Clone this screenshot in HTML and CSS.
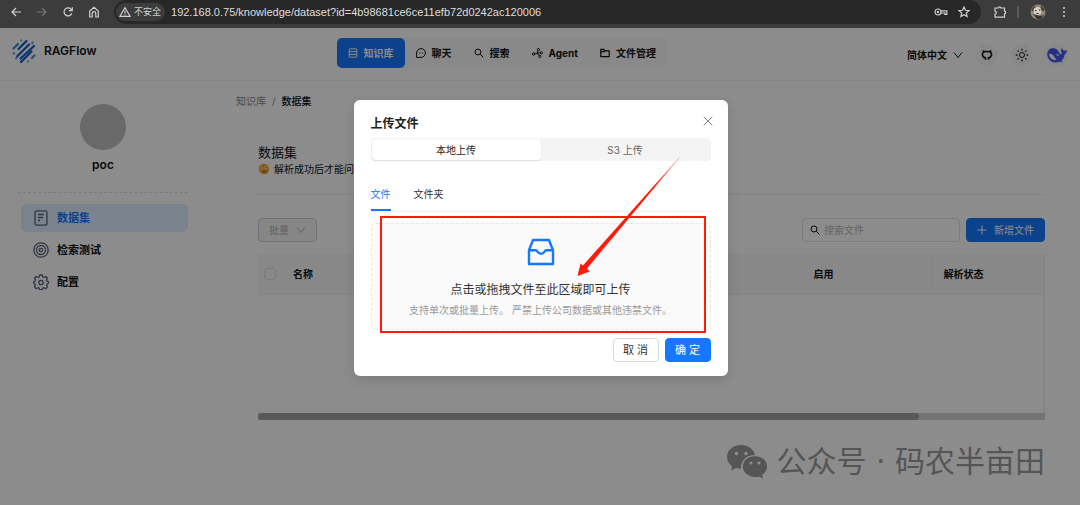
FILE: index.html
```html
<!DOCTYPE html>
<html lang="zh-CN">
<head>
    <meta charset="UTF-8">
    <meta name="viewport" content="width=device-width, initial-scale=1.0">
    <title>RAGFlow</title>
    <link rel="stylesheet" href="styles.css">
</head>
<body>

<div class="browser-bar">
    <button class="bar-button" aria-label="后退">
        <svg width="12" height="12" viewBox="0 0 12 12"><path d="M11 6H2M6 2L2 6l4 4"/></svg>
    </button>
    <button class="bar-button dim" aria-label="前进">
        <svg width="12" height="12" viewBox="0 0 12 12"><path d="M1 6h9M6 2l4 4-4 4"/></svg>
    </button>
    <button class="bar-button" aria-label="刷新">
        <svg width="12" height="12" viewBox="0 0 12 12"><path d="M9.8 7.3A4 4 0 1 1 9 3.2L10 4.3M10.3 1.2v3.4H6.8"/></svg>
    </button>
    <button class="bar-button" aria-label="主页">
        <svg width="12" height="12" viewBox="0 0 12 12"><path d="M1.7 11V5L6 1.4 10.3 5v6H7.8V7.5a1.8 1.8 0 0 0-3.6 0V11z"/></svg>
    </button>
    <div class="address">
        <span class="chip">
            <svg width="12" height="12" viewBox="0 0 12 12"><path d="M6 1.8L11 10.3H1zM6 4.8v2.6M6 8.2v1"/></svg>
            不安全
        </span>
        <input type="text" class="url" aria-label="地址" value="192.168.0.75/knowledge/dataset?id=4b98681ce6ce11efb72d0242ac120006">
        <button class="bar-button small" aria-label="密码">
            <svg width="14" height="12" viewBox="0 0 14 12"><circle cx="4" cy="6" r="3"/><circle cx="4" cy="6" r=".6"/><path d="M7 4.8h5.8v3.6h-2V7H7"/></svg>
        </button>
        <button class="bar-button small" aria-label="收藏">
            <svg width="12" height="12" viewBox="0 0 12 12"><path d="M6 1l1.4 3.3 3.6.3-2.7 2.4.8 3.5L6 8.7l-3.1 1.8.8-3.5L1 4.6l3.6-.3z"/></svg>
        </button>
    </div>
    <button class="bar-button" aria-label="扩展程序">
        <svg width="14" height="14" viewBox="0 0 14 14"><path d="M2 3h3.300c0-1.500 2.600-1.500 2.600 0H11.500v3.200c1.600 0 1.600 2.600 0 2.600V12.200H2V9.200c1.700 0 1.700-3 0-3z"/></svg>
    </button>
    <span class="bar-line"></span>
    <button class="bar-button profile" aria-label="用户">
        <svg width="16" height="16" viewBox="0 0 16 16"><circle cx="8" cy="8" r="7.500" fill="#8f8778" stroke="none"/><path d="M1 6a7 7 0 0 1 4-4l2 2-3 4zM11 1.500l4 4-2 2-3-2z" fill="#4c4132" stroke="none"/><path d="M3 10l4 5h4l3-4-4 1z" fill="#3c342c" stroke="none"/><ellipse cx="7.500" cy="7" rx="4" ry="4" fill="#d2cec8" stroke="none"/><path d="M5 6.500h1.500M9 6h1.500M6.500 9.500h2" stroke="#222"/></svg>
    </button>
    <button class="bar-button" aria-label="菜单">
        <svg width="4" height="14" viewBox="0 0 4 14" class="dots"><circle cx="2" cy="3" r="1"/><circle cx="2" cy="7" r="1"/><circle cx="2" cy="11" r="1"/></svg>
    </button>
</div>

<div class="page">
    <header>
        <a href="#" class="brand">
            <svg width="24" height="26" viewBox="0 0 24 26">
                <g fill="none" stroke-linecap="round" stroke-width="2.200">
                    <path stroke="#1659cc" d="M6.500 11L14.500 3M5 18.500L17 6.500M8.500 20.500L22 8M9 24L19.500 13.500"/>
                    <path stroke="#3d8ed0" d="M1.500 10.500L6 6M20 20l2.500-2.500M1.800 15.500l.1-.1"/>
                    <path stroke="#6fb0dc" d="M9 2.500l.1-.1M4 20.500l.8-.8M20.800 4.500l-.8.8M16 23.500l.1-.1"/>
                </g>
            </svg>
            RAGFlow
        </a>
        <nav>
            <ul>
                <li><a href="#" class="active">
                    <svg width="10" height="10" viewBox="0 0 10 10"><path d="M1.200 1.700q0-.9.900-.9h5.800q.9 0 .9.900v6.600q0 .9-.9.900H2.100q-.9 0-.9-.9zM1.200 3.600h7.600M1.200 6.400h7.600"/></svg>
                    知识库</a></li>
                <li><a href="#">
                    <svg width="10" height="10" viewBox="0 0 10 10"><path d="M.6 9.400V5A4.400 4.400 0 1 1 5 9.400zM2.800 5h.8M4.600 5h.8M6.400 5h.8"/></svg>
                    聊天</a></li>
                <li><a href="#">
                    <svg width="10" height="10" viewBox="0 0 10 10"><circle cx="4" cy="4" r="2.900"/><path d="M6.200 6.200L9.300 9.300"/></svg>
                    搜索</a></li>
                <li><a href="#">
                    <svg width="11" height="10" viewBox="0 0 11 10"><circle cx="6.500" cy="1.600" r="1.100"/><circle cx="1.600" cy="6" r="1.200"/><circle cx="9.400" cy="4.800" r="1.100"/><circle cx="7.800" cy="8.400" r="1.100"/><path d="M6.200 2.700L5 5.200 2.700 5.800M5 5.200l3.300-.3M5 5.200l2.100 2.400"/></svg>
                    Agent</a></li>
                <li><a href="#">
                    <svg width="10" height="10" viewBox="0 0 10 10"><path d="M.8 8.700V1.300h3l1.300 1.500h4.100v5.900zM1 3.700h3.300l.8-.9" stroke-width="1.200"/></svg>
                    文件管理</a></li>
            </ul>
        </nav>
        <div class="header-tools">
            <button class="language">简体中文
                <svg width="10" height="8" viewBox="0 0 10 8"><path d="M1 1.500l4 5 4-5"/></svg>
            </button>
            <button class="round" aria-label="GitHub">
                <svg width="12" height="12" viewBox="0 0 12 12"><path stroke-width="1.600" d="M4.500 10.800V8.900C.9 8 .8 4.600 2.400 3.400l.1-1.200 1.400.5q2.100-.5 4.200 0l1.400-.5.1 1.200c1.600 1.200 1.500 4.600-2.100 5.500v1.900"/></svg>
            </button>
            <button class="round" aria-label="主题">
                <svg width="14" height="14" viewBox="0 0 14 14"><circle cx="7" cy="7" r="2.500"/><path stroke-width="1.300" d="M7 .8v1.600M7 11.600v1.600M.8 7h1.600M11.600 7h1.600M2.600 2.600l1.100 1.100M10.300 10.300l1.100 1.100M2.600 11.400l1.100-1.100M10.300 3.700l1.100-1.100"/></svg>
            </button>
            <button class="round" aria-label="账户">
                <svg width="20" height="16" viewBox="0 0 20 16"><path fill="#4558f0" stroke="none" d="M10.500 3C8.500.9 4.500.5 2.300 2.600-.4 5-.2 9 1.700 12c2.200 3.500 7 4.400 10.500 2.700l3.300.5-1-1.700c2-1.600 3-3.800 3-6 1.400-.6 2.300-2.200 2.500-4.500-1.200.9-2.200 1-3.300.4-.9-.5-1.200-1.300-1.600-2.400-1.400 1.300-1.600 3.200-.1 5L13.300 7.500z"/><path fill="#fff" stroke="none" d="M2 6.800c2.200-.4 3.800.7 5.100 2.600 1 1.500 1.600 2.700 2.700 3.300C5.800 13.700 2.200 11.300 2 6.800zM9.300 7c1.300-.5 2.500.6 2.400 2L10 8.400z"/></svg>
            </button>
        </div>
    </header>

    <div class="layout">
        <aside>
            <div class="avatar"></div>
            <div class="kb-name">poc</div>
            <ul class="side-menu">
                <li><a href="#" class="active">
                    <svg width="16" height="16" viewBox="0 0 16 16"><rect x="2" y=".8" width="12" height="14.400" rx="2"/><path d="M5 4.500h6M5 7.500h5M5 10.500h2"/></svg>
                    数据集</a></li>
                <li><a href="#">
                    <svg width="16" height="16" viewBox="0 0 16 16"><circle cx="8" cy="8" r="7.200"/><circle cx="8" cy="8" r="4.500"/><circle cx="8" cy="8" r="1.700"/></svg>
                    检索测试</a></li>
                <li><a href="#">
                    <svg width="16" height="16" viewBox="0 0 16 16"><path stroke-linejoin="round" d="M6.700 1h2.600l.5 2 1.200.5 1.800-1 1.700 1.700-1 1.800.5 1.200 1.500.4v1.900l-1.500.5-.5 1.200 1 1.700-1.800 1.800-1.700-1-1.200.5-.5 1.500H6.700l-.5-1.500-1.200-.5-1.700 1-1.800-1.800 1-1.700L2 10 .7 9.500V7.600L2 7.200 2.500 6l-1-1.800 1.800-1.700 1.700 1L6.200 3z"/><circle cx="8" cy="8.500" r="2.200"/></svg>
                    配置</a></li>
            </ul>
        </aside>

        <main>
            <div class="breadcrumb"><a href="#">知识库</a><span>/</span><b>数据集</b></div>
            <section class="content">
                <h1>数据集</h1>
                <p class="tip">
                    <svg width="12" height="12" viewBox="0 0 12 12"><circle cx="6" cy="6" r="5.200" fill="#f5a030"/><circle cx="4" cy="5" r="1.500" fill="#ffe8b8"/><circle cx="8" cy="4.600" r="1.500" fill="#ffe8b8"/><circle cx="4.300" cy="5" r=".6" fill="#523010"/><circle cx="8.200" cy="4.600" r=".6" fill="#523010"/><path d="M4.500 8.500q2 .8 3.500-.5" stroke="#704010" fill="none"/></svg>
                    解析成功后才能问答哦。
                </p>
                <div class="toolbar">
                    <button class="btn batch" disabled>批量
                        <svg width="10" height="8" viewBox="0 0 10 8"><path d="M1 1.500l4 5 4-5"/></svg>
                    </button>
                    <div class="toolbar-right">
                        <label class="search">
                            <svg width="10" height="10" viewBox="0 0 10 10"><circle cx="4" cy="4" r="3"/><path d="M6.300 6.300l3 3"/></svg>
                            <input type="text" placeholder="搜索文件" aria-label="搜索文件">
                        </label>
                        <button class="btn primary add">
                            <svg width="10" height="10" viewBox="0 0 10 10"><path d="M5 .5v9M.5 5h9"/></svg>
                            新增文件
                        </button>
                    </div>
                </div>
                <div class="table-wrap">
                    <table>
                        <thead>
                            <tr>
                                <th class="col-check"><input type="checkbox" aria-label="全选"></th>
                                <th>名称</th>
                                <th class="col-enable">启用</th>
                                <th class="col-status">解析状态</th>
                            </tr>
                        </thead>
                    </table>
                </div>
                <div class="scroll-track"><div class="scroll-thumb"></div></div>
            </section>
        </main>
    </div>

    <div class="mask"></div>

    <div class="modal" role="dialog" aria-labelledby="modal-title">
        <button class="close" aria-label="关闭">
            <svg width="10" height="10" viewBox="0 0 10 10"><path d="M.7.7l8.600 8.600M9.300.7L.7 9.300"/></svg>
        </button>
        <h2 id="modal-title">上传文件</h2>
        <div class="segmented">
            <button class="selected">本地上传</button>
            <button>S3 上传</button>
        </div>
        <div class="tabs">
            <button class="selected">文件</button>
            <button>文件夹</button>
        </div>
        <div class="dragger">
            <svg width="28" height="28" viewBox="0 0 28 28"><path d="M2 12.200V26h24V12.200L22 2H6zM2 12.200h6.800c1.800 0 1.700 3.600 5.200 3.600s3.400-3.600 5.200-3.600H26"/></svg>
            <p class="drag-text">点击或拖拽文件至此区域即可上传</p>
            <p class="drag-hint">支持单次或批量上传。 严禁上传公司数据或其他违禁文件。</p>
        </div>
        <div class="modal-footer">
            <button class="btn">取 消</button>
            <button class="btn primary">确 定</button>
        </div>
        <!-- 标注：红框和箭头 -->
        <svg class="annotation" width="374" height="275" viewBox="0 0 374 275">
            <defs>
                <linearGradient id="tail" x1="1" y1="0" x2="0" y2="1">
                    <stop offset="0" stop-color="#ff1a0a" stop-opacity=".3"/>
                    <stop offset=".25" stop-color="#ff1a0a"/>
                </linearGradient>
            </defs>
            <rect x="27" y="117" width="324" height="115" fill="none" stroke="#ff1a0a" stroke-width="2"/>
            <path fill="url(#tail)" d="M326.500 56.500L233 168.500 235.500 171.500 223.500 176 226.500 163.500 229 165.500 325.500 57z"/>
        </svg>
    </div>

    <div class="watermark">
        <svg width="42" height="36" viewBox="0 0 42 36">
            <path d="M15 1C7 1 1 6.300 1 13c0 3.800 2 7 5.200 9.200L5 26.500l5-2.600c1.700.5 3.300.7 5 .7C14.500 17 20 11 29 11 27.500 5 22 1 15 1z"/>
            <path d="M29 12.300c-7 0-12.200 4.600-12.200 10.300S22 33 29 33c1.500 0 2.800-.2 4-.6l4.200 2.100-1.100-3.600c3-1.900 5-4.900 5-8.300 0-5.700-5.100-10.300-12.100-10.300z"/>
            <g fill="#8c8c8c"><circle cx="10.500" cy="9.500" r="1.800"/><circle cx="20" cy="9.500" r="1.800"/><circle cx="25" cy="19" r="1.600"/><circle cx="33" cy="19" r="1.600"/></g>
        </svg>
        公众号 · 码农半亩田
    </div>
</div>

</body>
</html>
```
FILE: styles.css
```css
* {
    box-sizing: border-box;
}

body {
    font-family: Inter, "Noto Sans CJK SC", sans-serif;
    font-size: 10px;
    line-height: 16px;
    margin: 0;
    min-height: 100vh;
    display: flex;
    flex-direction: column;
    color: #111;
}

button {
    font: inherit;
    color: inherit;
    background: none;
    border: none;
    padding: 0;
    white-space: nowrap;
    cursor: pointer;
}

input {
    font: inherit;
    border: none;
    background: none;
    padding: 0;
    outline: none;
}

a {
    color: inherit;
    text-decoration: none;
}

ul {
    list-style: none;
    margin: 0;
    padding: 0;
}

svg {
    flex: none;
    fill: none;
    stroke: currentColor;
}

/* 浏览器工具栏 */
.browser-bar {
    display: flex;
    align-items: center;
    height: 28px;
    padding: 0 3px 4px;
    background-color: #3c3c3c;
    color: #d0d0d0;
}

.browser-bar svg {
    stroke-width: 1.2;
}

.bar-button {
    display: flex;
    align-items: center;
    justify-content: center;
    width: 26px;
    height: 24px;
}

.bar-button.small {
    width: 23px;
}

.bar-button.dim {
    color: #777;
}

.bar-button .dots {
    fill: currentColor;
    stroke: none;
}

.bar-button.profile {
    width: 26px;
}

.bar-line {
    width: 2px;
    height: 12px;
    margin: 0 6px 0 4px;
    background-color: #5a5a5a;
}

.address {
    flex: 1;
    display: flex;
    align-items: center;
    height: 24px;
    margin: 0 6px 0 7px;
    padding: 0 6px 0 2px;
    border-radius: 12px;
    background-color: #282828;
}

.chip {
    display: flex;
    align-items: center;
    gap: 3px;
    height: 18px;
    padding: 0 4px 0 3px;
    border-radius: 9px;
    background-color: #3c3c3c;
    font-size: 9px;
}

.url {
    flex: 1;
    margin-left: 6px;
    font-family: "Liberation Sans", sans-serif;
    font-size: 11px;
    color: #dedede;
}

/* 页面 */
.page {
    position: relative;
    flex: 1;
    background-color: #fff;
}

header {
    display: flex;
    justify-content: space-between;
    align-items: center;
    height: 53px;
    padding: 0 12px 2px;
    border-bottom: 1px solid #eee;
}

.brand {
    display: flex;
    align-items: center;
    gap: 8px;
    padding-bottom: 4px;
    font-size: 12px;
    font-weight: 600;
}

nav ul {
    display: flex;
    border-radius: 5px;
    background-color: #f9f9f9;
}

nav a {
    display: flex;
    align-items: center;
    gap: 6px;
    height: 30px;
    padding: 0 11px;
    font-weight: 700;
}

nav a.active {
    border-radius: 5px;
    background-color: #1677ff;
    color: #fff;
}

.header-tools {
    display: flex;
    align-items: center;
    gap: 13px;
    padding-top: 3px;
}

.language {
    display: flex;
    align-items: center;
    gap: 6px;
    font-weight: 700;
}

.round {
    display: flex;
    align-items: center;
    justify-content: center;
    width: 22px;
    height: 22px;
    border-radius: 50%;
    background-color: #f7f7f7;
}

.layout {
    display: flex;
}

aside {
    width: 208px;
    padding: 23px 20px 0 18px;
}

.avatar {
    width: 46px;
    height: 46px;
    margin: 0 auto;
    border-radius: 50%;
    background-color: #bfbfbf;
}

.kb-name {
    padding: 7px 0 19px;
    border-bottom: 1px dashed #dedede;
    font-size: 12px;
    font-weight: 600;
    text-align: center;
}

.side-menu {
    display: flex;
    flex-direction: column;
    gap: 4px;
    padding: 11px 0 0 3px;
}

.side-menu a {
    display: flex;
    align-items: center;
    gap: 8px;
    height: 28px;
    padding-left: 12px;
    border-radius: 5px;
    font-size: 11px;
    font-weight: 700;
}

.side-menu svg {
    stroke: #5c6080;
    stroke-width: 1.3;
}

.side-menu a.active {
    background-color: #dfefff;
    color: #1677ff;
}

main {
    flex: 1;
    padding: 12px 35px 0 28px;
}

.breadcrumb {
    display: flex;
    gap: 6px;
    color: #888;
}

.breadcrumb b {
    font-weight: 500;
    color: #111;
}

.content {
    margin-left: 22px;
}

.content h1 {
    margin: 34px 0 0;
    font-size: 13px;
    font-weight: 400;
    line-height: 18px;
}

.tip {
    display: flex;
    align-items: center;
    gap: 4px;
    margin: 0;
    padding-bottom: 17px;
    border-bottom: 1px solid #eee;
}

.tip svg {
    stroke: none;
}

.toolbar {
    display: flex;
    justify-content: space-between;
    margin: 23px 0 12px;
}

.toolbar-right {
    display: flex;
    gap: 6px;
}

.btn {
    display: flex;
    align-items: center;
    justify-content: center;
    height: 24px;
    border: 1px solid #d9d9d9;
    border-radius: 4px;
    padding: 0 10px;
}

.btn.primary {
    border-color: #1677ff;
    background-color: #1677ff;
    color: #fff;
}

.batch {
    gap: 7px;
    border-color: #d0d0d0;
    background-color: #f5f5f5;
    color: #b0b0b0;
}

.add {
    gap: 7px;
}

.search {
    display: flex;
    align-items: center;
    gap: 4px;
    width: 158px;
    height: 24px;
    padding: 0 7px;
    border: 1px solid #e0e0e0;
    border-radius: 4px;
}

.search input {
    flex: 1;
    min-width: 0;
}

.search input::placeholder {
    color: #b8b8b8;
}

.table-wrap {
    min-height: 159px;
    border-right: 2px solid #f3f3f3;
}

table {
    width: 100%;
    border-collapse: collapse;
    table-layout: fixed;
}

th {
    height: 40px;
    padding: 0 11px;
    border-bottom: 1px solid #f3f3f3;
    background-color: #f8f8f8;
    text-align: left;
    font-weight: 700;
}

.col-check {
    width: 24px;
    padding: 0 6px;
}

.col-enable {
    width: 130px;
    border-left: 1px solid #f3f3f3;
}

.col-status {
    width: 111px;
    border-left: 1px solid #f3f3f3;
}

th input {
    appearance: none;
    display: block;
    width: 12px;
    height: 12px;
    margin: 0;
    border: 1px solid #e0e0e0;
    border-radius: 3px;
}

.scroll-track {
    height: 7px;
    background-color: #d2d2d2;
}

.scroll-thumb {
    width: 84%;
    height: 7px;
    border-radius: 4px;
    background-color: #a2a2a2;
}

.mask {
    position: absolute;
    inset: 0;
    background-color: rgba(0, 0, 0, 0.45);
}

/* 上传弹窗 */
.modal {
    position: absolute;
    top: 72px;
    left: 1px;
    right: 0;
    width: 374px;
    max-width: 100%;
    margin: 0 auto;
    padding: 16px 17px 14px;
    border-radius: 6px;
    background-color: #fff;
    box-shadow: 0 4px 12px rgba(0, 0, 0, 0.12);
    color: #333;
}

.modal h2 {
    margin: 0;
    padding-bottom: 6px;
    font-size: 12px;
    font-weight: 700;
    line-height: 16px;
    color: #222;
}

.close {
    position: absolute;
    top: 16px;
    right: 15px;
    display: flex;
    color: #888;
}

.segmented {
    display: grid;
    grid-template-columns: 1fr 1fr;
    height: 23px;
    padding: 1px;
    border-radius: 4px;
    background-color: #f4f4f4;
}

.segmented button {
    border-radius: 4px;
    color: #666;
}

.segmented .selected {
    background-color: #fff;
    box-shadow: 0 1px 2px rgba(0, 0, 0, 0.1);
    color: #222;
}

.tabs {
    display: flex;
    gap: 23px;
    margin-top: 17px;
    border-bottom: 1px solid #f0f0f0;
}

.tabs button {
    height: 33px;
    border-bottom: 2px solid transparent;
}

.tabs .selected {
    border-color: #1677ff;
    color: #1677ff;
}

.dragger {
    display: flex;
    flex-direction: column;
    align-items: center;
    height: 107px;
    margin: 11px 0 8px;
    padding-top: 14px;
    border: 1px dashed #e8e8e8;
    border-radius: 5px;
    background-color: #fafafa;
}

.dragger svg {
    stroke: #1677ff;
    stroke-width: 2.4;
    stroke-linejoin: round;
}

.drag-text {
    margin: 16px 0 4px;
    font-size: 12px;
}

.drag-hint {
    margin: 0;
    color: #999;
}

.modal-footer {
    display: flex;
    justify-content: flex-end;
    gap: 6px;
}

.modal-footer .btn {
    width: 46px;
    padding: 0;
    font-size: 11px;
}

.annotation {
    position: absolute;
    top: 0;
    left: 0;
    stroke: none;
    pointer-events: none;
}

.watermark {
    position: absolute;
    right: 35px;
    bottom: 23px;
    display: flex;
    align-items: center;
    gap: 8px;
    font-family: "DejaVu Sans", "Noto Sans CJK SC", sans-serif;
    font-size: 30px;
    line-height: 40px;
    color: #555;
}

.watermark svg {
    fill: #555;
    stroke: none;
}
```
